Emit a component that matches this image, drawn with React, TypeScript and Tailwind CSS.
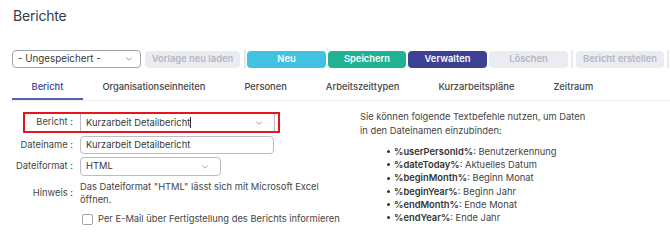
import { ChevronDown } from 'lucide-react';

const buttons = [
  { label: 'Neu', cls: 'w-[79px] bg-[#41c2e2] text-white' },
  { label: 'Speichern', cls: 'w-[78px] bg-[#1fb393] text-white' },
  { label: 'Verwalten', cls: 'w-[79px] bg-[#3c4195] text-white' },
  { label: 'Löschen', cls: 'w-[79px] bg-[#ebecf2] text-[#b3b6c2]' },
];

const tabs = ['Bericht', 'Organisationseinheiten', 'Personen', 'Arbeitszeittypen', 'Kurzarbeitspläne', 'Zeitraum'];

const commands = [
  { key: '%userPersonId%', text: 'Benutzerkennung' },
  { key: '%dateToday%', text: 'Aktuelles Datum' },
  { key: '%beginMonth%', text: 'Beginn Monat' },
  { key: '%beginYear%', text: 'Beginn Jahr' },
  { key: '%endMonth%', text: 'Ende Monat' },
  { key: '%endYear%', text: 'Ende Jahr' },
];

const Separator = () => <div className="h-[18px] w-[2px] bg-[#e8e9ee]" />;

const App = () => {
  return (
    <div className="w-[670px] h-[243px] overflow-hidden bg-white pl-3 font-['Inter',sans-serif] text-[9.35px] text-[#383838]">
      <h1 className="pt-[6px] pl-px text-[14px] leading-[20px] tracking-[-0.2px] text-[#363a48]">Berichte</h1>

      <div className="mt-[24px] flex items-center">
        <div className="flex h-[18px] w-[129px] items-center justify-between rounded-[4px] border border-[#a0a4ac] pl-[5px] pr-[6px] text-[9.8px]">
          <span>- Ungespeichert -</span>
          <ChevronDown size={10} strokeWidth={1.5} className="text-[#666]" />
        </div>
        <button className="ml-[4px] h-[17px] w-[95px] whitespace-nowrap rounded-[4px] bg-[#ebecf2] font-semibold text-[#b3b6c2]">
          Vorlage neu laden
        </button>
        <div className="ml-[4px] mr-[1px]">
          <Separator />
        </div>
        <div className="flex gap-[2px]">
          {buttons.map((b) => (
            <button key={b.label} className={`h-[17px] rounded-[4px] font-semibold ${b.cls}`}>
              {b.label}
            </button>
          ))}
        </div>
        <div className="ml-[3px] mr-[3px]">
          <Separator />
        </div>
        <button className="h-[17px] w-[88px] whitespace-nowrap rounded-[4px] bg-[#ebecf2] font-semibold text-[#b3b6c2]">
          Bericht erstellen
        </button>
        <div className="ml-[3px]">
          <Separator />
        </div>
      </div>

      <div className="mt-[4px] flex border-b border-[#eeeff2]">
        {tabs.map((t, i) => (
          <div
            key={t}
            className={`px-[19.5px] pt-[8px] pb-[5px] text-[9.35px] leading-[13px] font-medium whitespace-nowrap ${
              i === 0 ? 'border-b-2 border-[#5b5fb0] text-[#3c4195]' : 'border-b-2 border-transparent text-[#444]'
            }`}
          >
            {t}
          </div>
        ))}
      </div>

      <div className="mt-[12px] flex">
        <div className="flex w-[348px] flex-col">
          <div className="relative flex items-center">
            <div className="absolute left-[11px] top-[-1px] h-[21px] w-[257px] border-2 border-[#e8131c]" />
            <span className="w-[61px] whitespace-nowrap text-right text-[#444]">Bericht :</span>
            <div className="ml-[7px] flex h-[19px] w-[195px] items-center justify-between border-l border-r border-[#b8bcc6] pl-[5px] pr-[10px]">
              <span>
                Kurzarbeit Detailbericht<span className="inline-block h-[11px] w-px translate-y-[2px] bg-[#333]" />
              </span>
              <ChevronDown size={10} strokeWidth={1.5} className="text-[#666]" />
            </div>
          </div>
          <div className="mt-[4px] flex items-center">
            <span className="w-[61px] whitespace-nowrap text-right text-[#444]">Dateiname :</span>
            <div className="ml-[7px] flex h-[18px] w-[194px] items-center rounded-[4px] border border-[#b8bcc6] pl-[5px]">
              Kurzarbeit Detailbericht
            </div>
          </div>
          <div className="mt-[3px] flex items-center">
            <span className="w-[61px] whitespace-nowrap text-right text-[#444]">Dateiformat :</span>
            <div className="ml-[7px] flex h-[19px] w-[141px] items-center justify-between rounded-[4px] border border-[#b8bcc6] pl-[5px] pr-[10px]">
              <span>HTML</span>
              <ChevronDown size={10} strokeWidth={1.5} className="text-[#666]" />
            </div>
          </div>
          <div className="mt-[4px] flex items-center">
            <span className="w-[61px] whitespace-nowrap text-right text-[#444]">Hinweis :</span>
            <p className="ml-[7px] w-[245px] leading-[13px] text-[#444]">
              Das Dateiformat "HTML" lässt sich mit Microsoft Excel öffnen.
            </p>
          </div>
          <label className="mt-[6px] ml-[70px] flex items-center gap-[5px] whitespace-nowrap text-[#444]">
            <span className="h-[11px] w-[11px] rounded-[2px] border border-[#a0a4ac]" />
            Per E-Mail über Fertigstellung des Berichts informieren
          </label>
        </div>

        <div className="-mt-[3px] leading-[14px] text-[#444]">
          <p>
            Sie können folgende Textbefehle nutzen, um Daten
            <br />
            in den Dateinamen einzubinden:
          </p>
          <ul className="mt-[7px] flex flex-col pl-[27px] leading-[13.2px]">
            {commands.map((c) => (
              <li key={c.key} className="flex items-center gap-[4px]">
                <span className="h-[3px] w-[3px] rounded-full bg-[#333]" />
                <span>
                  <b className="font-semibold text-[#333]">{c.key}</b>: {c.text}
                </span>
              </li>
            ))}
          </ul>
        </div>
      </div>
    </div>
  );
};

export default App;
